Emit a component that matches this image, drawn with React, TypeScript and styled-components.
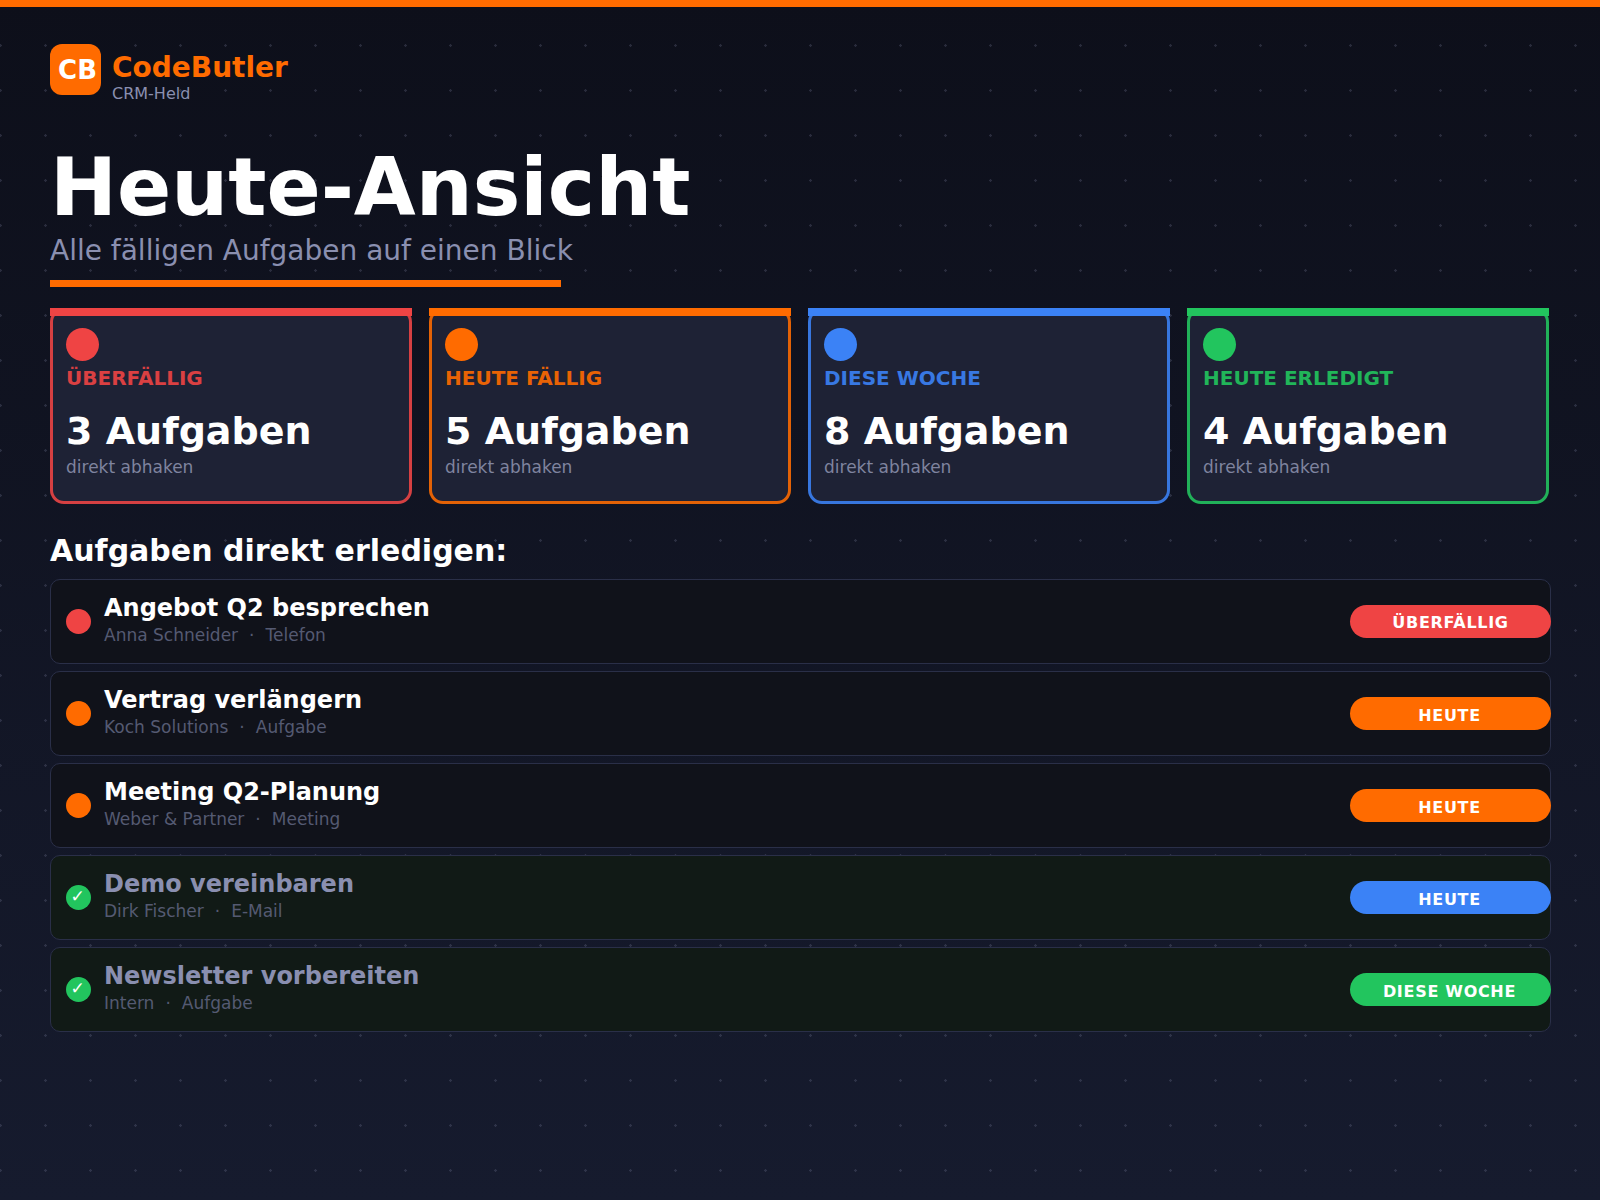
import styled, { createGlobalStyle } from "styled-components"

const RED = "#ef4444"
const ORANGE = "#ff6b00"
const BLUE = "#3b82f6"
const GREEN = "#22c55e"

const stats = [
  { label: "ÜBERFÄLLIG", value: "3 Aufgaben", color: RED },
  { label: "HEUTE FÄLLIG", value: "5 Aufgaben", color: ORANGE },
  { label: "DIESE WOCHE", value: "8 Aufgaben", color: BLUE },
  { label: "HEUTE ERLEDIGT", value: "4 Aufgaben", color: GREEN },
]

const tasks = [
  { title: "Angebot Q2 besprechen", who: "Anna Schneider", kind: "Telefon", badge: "ÜBERFÄLLIG", color: RED, badgeColor: RED, done: false },
  { title: "Vertrag verlängern", who: "Koch Solutions", kind: "Aufgabe", badge: "HEUTE", color: ORANGE, badgeColor: ORANGE, done: false },
  { title: "Meeting Q2-Planung", who: "Weber & Partner", kind: "Meeting", badge: "HEUTE", color: ORANGE, badgeColor: ORANGE, done: false },
  { title: "Demo vereinbaren", who: "Dirk Fischer", kind: "E-Mail", badge: "HEUTE", color: GREEN, badgeColor: BLUE, done: true },
  { title: "Newsletter vorbereiten", who: "Intern", kind: "Aufgabe", badge: "DIESE WOCHE", color: GREEN, badgeColor: GREEN, done: true },
]

export default function App() {
  return (
    <>
      <GlobalStyle />
      <Page>
        <TopBar />
        <Content>
          <Brand>
            <Logo>CB</Logo>
            <BrandText>
              <BrandName>CodeButler</BrandName>
              <BrandTag>CRM-Held</BrandTag>
            </BrandText>
          </Brand>

          <Title>Heute-Ansicht</Title>
          <Subtitle>Alle fälligen Aufgaben auf einen Blick</Subtitle>
          <Rule />

          <StatGrid>
            {stats.map(stat => (
              <StatCard key={stat.label} $color={stat.color}>
                <StatDot $color={stat.color} />
                <StatLabel $color={stat.color}>{stat.label}</StatLabel>
                <StatValue>{stat.value}</StatValue>
                <StatHint>direkt abhaken</StatHint>
              </StatCard>
            ))}
          </StatGrid>

          <SectionTitle>Aufgaben direkt erledigen:</SectionTitle>
          <TaskList>
            {tasks.map(task => (
              <TaskRow key={task.title} $done={task.done}>
                <TaskDot $color={task.color}>{task.done && <Check>✓</Check>}</TaskDot>
                <TaskText>
                  <TaskTitle $done={task.done}>{task.title}</TaskTitle>
                  <TaskMeta>
                    {task.who}
                    <MetaSep>·</MetaSep>
                    {task.kind}
                  </TaskMeta>
                </TaskText>
                <Badge $color={task.badgeColor} $raised={task.badge === "ÜBERFÄLLIG"}>
                  {task.badge}
                </Badge>
              </TaskRow>
            ))}
          </TaskList>
        </Content>
      </Page>
    </>
  )
}

const GlobalStyle = createGlobalStyle`
  html, body {
    margin: 0;
    padding: 0;
  }

  body {
    font-family: "DejaVu Sans", sans-serif;
  }

  * {
    box-sizing: border-box;
  }
`

const Page = styled.div`
  width: 1600px;
  height: 1200px;
  overflow: hidden;
  background-color: #0d0f1a;
  background-image:
    radial-gradient(circle at 1.5px 1.5px, rgba(138, 143, 176, 0.22) 1px, transparent 1.5px),
    linear-gradient(180deg, #0d0f1a 0%, #161b2e 100%);
  background-size: 45px 45px, 100% 100%;
  background-position: -1px -1px, 0 0;
`

const TopBar = styled.div`
  height: 7px;
  background: ${ORANGE};
`

const Content = styled.div`
  display: flex;
  flex-direction: column;
  padding: 37px 49px 0 50px;
`

const Brand = styled.div`
  display: flex;
  gap: 11px;
  height: 62px;
`

const Logo = styled.div`
  width: 51px;
  height: 51px;
  border-radius: 12px;
  background: ${ORANGE};
  color: #fff;
  display: flex;
  align-items: center;
  justify-content: center;
  font-size: 26px;
  font-weight: 700;
  padding-left: 4px;
`

const BrandText = styled.div`
  display: flex;
  flex-direction: column;
`

const BrandName = styled.div`
  margin-top: 7px;
  color: ${ORANGE};
  font-size: 28px;
  font-weight: 700;
  line-height: 34px;
`

const BrandTag = styled.div`
  color: #8a8fb0;
  font-size: 16px;
  line-height: 18px;
`

const Title = styled.h1`
  margin: 37px 0 1px;
  color: #fff;
  font-size: 80px;
  font-weight: 700;
  line-height: 90px;
`

const Subtitle = styled.div`
  color: #8a8fb0;
  font-size: 28px;
  line-height: 34px;
`

const Rule = styled.div`
  width: 511px;
  height: 7px;
  margin-top: 12px;
  background: ${ORANGE};
`

const StatGrid = styled.div`
  display: grid;
  grid-template-columns: repeat(4, 1fr);
  gap: 17px;
  margin-top: 21px;
  margin-right: 2px;
`

const StatCard = styled.div<{ $color: string }>`
  position: relative;
  height: 196px;
  padding: 17px 13px 0;
  background: #1e2235;
  border: 3px solid ${p => p.$color}e0;
  border-radius: 14px;

  &::before {
    content: "";
    position: absolute;
    top: -3px;
    left: -3px;
    right: -3px;
    height: 8px;
    background: ${p => p.$color};
  }
`

const StatDot = styled.div<{ $color: string }>`
  width: 33px;
  height: 33px;
  border-radius: 50%;
  background: ${p => p.$color};
`

const StatLabel = styled.div<{ $color: string }>`
  margin-top: 3px;
  color: ${p => p.$color};
  opacity: 0.9;
  font-size: 20px;
  font-weight: 700;
  line-height: 28px;
`

const StatValue = styled.div`
  margin-top: 16px;
  color: #fff;
  font-size: 38px;
  font-weight: 700;
  line-height: 46px;
`

const StatHint = styled.div`
  margin-top: 1px;
  color: #7f849f;
  font-size: 17px;
  line-height: 24px;
`

const SectionTitle = styled.h2`
  margin: 26px 0 0;
  color: #fff;
  font-size: 30px;
  font-weight: 700;
  line-height: 42px;
`

const TaskList = styled.div`
  display: flex;
  flex-direction: column;
  gap: 7px;
  margin-top: 7px;
`

const TaskRow = styled.div<{ $done: boolean }>`
  display: flex;
  align-items: center;
  height: 85px;
  padding-left: 15px;
  background: ${p => (p.$done ? "#111a16" : "#10121a")};
  border: 1px solid #2a2f48;
  border-radius: 10px;
`

const TaskDot = styled.div<{ $color: string }>`
  flex: none;
  width: 25px;
  height: 25px;
  border-radius: 50%;
  background: ${p => p.$color};
  color: #fff;
  display: flex;
  align-items: center;
  justify-content: center;
  font-size: 17px;
  line-height: 1;
`

const Check = styled.span`
  margin: -2px 2px 0 0;
`

const TaskText = styled.div`
  flex: 1;
  display: flex;
  flex-direction: column;
  margin-left: 13px;
  padding-bottom: 5px;
`

const TaskTitle = styled.div<{ $done: boolean }>`
  color: ${p => (p.$done ? "#8a8fb0" : "#fff")};
  font-size: 24px;
  font-weight: 700;
  line-height: 32px;
`

const TaskMeta = styled.div`
  margin-top: -1px;
  color: #555a72;
  font-size: 17px;
  line-height: 24px;
`

const MetaSep = styled.span`
  margin: 0 11px;
`

const Badge = styled.div<{ $color: string; $raised: boolean }>`
  flex: none;
  width: 201px;
  height: 33px;
  margin-right: -1px;
  border-radius: 17px;
  background: ${p => p.$color};
  color: #fff;
  display: flex;
  align-items: center;
  justify-content: center;
  padding: ${p => (p.$raised ? "2px 0 0" : "4px 2px 0 0")};
  font-size: 16px;
  font-weight: 700;
  letter-spacing: 0.7px;
`
